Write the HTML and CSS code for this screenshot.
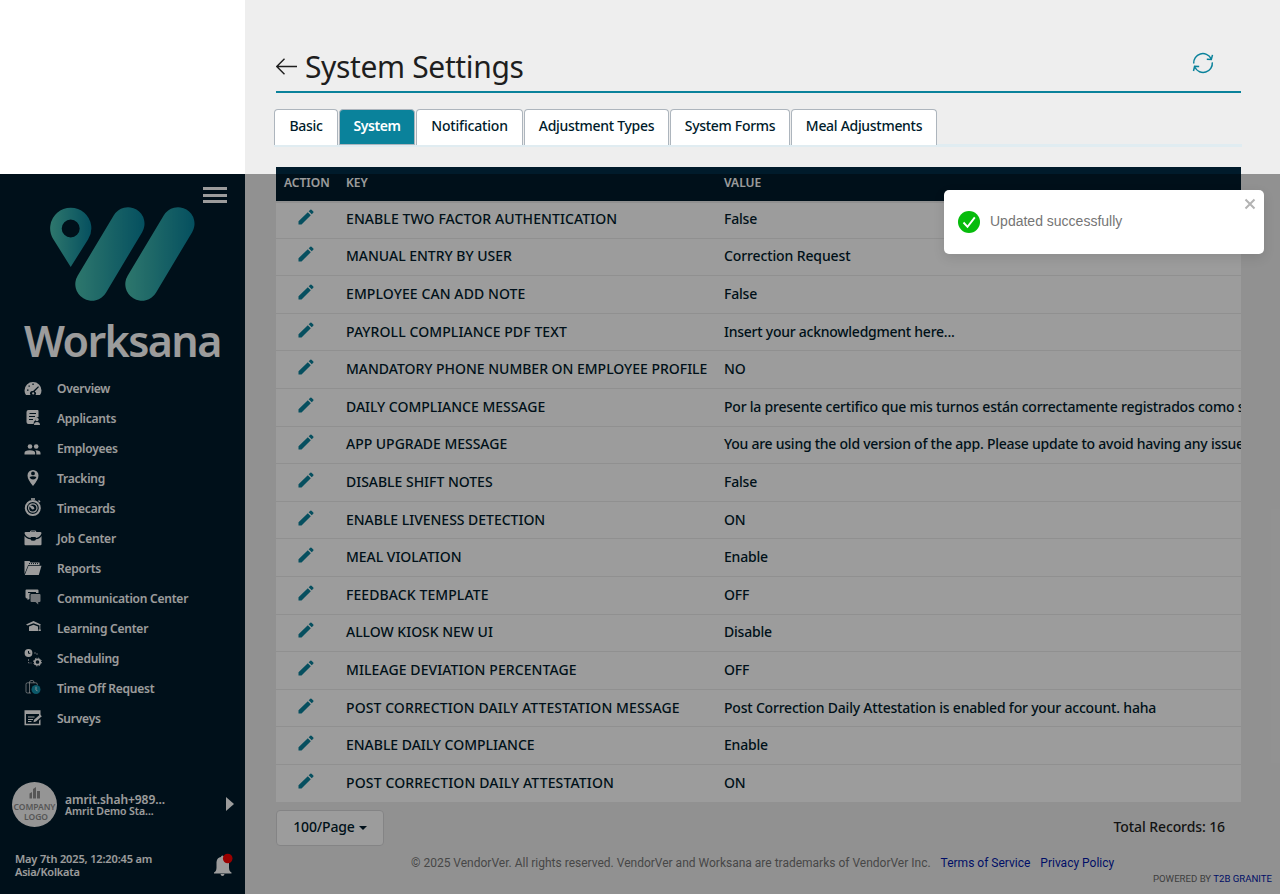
FILE: index.html
```
<!DOCTYPE html>
<html lang="en">
<head>
<meta charset="utf-8">
<title>System Settings</title>
<link rel="stylesheet" href="styles.css">
</head>
<body>
<svg class="defs" width="0" height="0">
  <symbol id="pencil" viewBox="0 0 16 16"><path d="M.5 15.500v-3.300L9.800 3.200l3 3-9.300 9.300zM10.700 2.300l1.600-1.600q.6-.5 1.200 0l1.800 1.800q.5.600 0 1.200l-1.600 1.600z"/></symbol>
</svg>
<div class="app">
  <aside class="sidebar">
    <div class="burger"><i></i><i></i><i></i></div>
    <svg class="mark" width="146" height="95" viewBox="0 0 146 95">
      <defs>
        <linearGradient id="g1" gradientUnits="userSpaceOnUse" x1="0" y1="0" x2="42" y2="0"><stop offset="0" stop-color="#4cc3b2"/><stop offset="1" stop-color="#08829c"/></linearGradient>
        <linearGradient id="g2" gradientUnits="userSpaceOnUse" x1="25" y1="0" x2="95" y2="0"><stop offset="0" stop-color="#4cc3b2"/><stop offset="1" stop-color="#08829c"/></linearGradient>
        <linearGradient id="g3" gradientUnits="userSpaceOnUse" x1="75" y1="0" x2="145" y2="0"><stop offset="0" stop-color="#4cc3b2"/><stop offset="1" stop-color="#08829c"/></linearGradient>
      </defs>
      <path fill="url(#g1)" fill-rule="evenodd" d="M20.700 60 3.500 32.500A20.600 20.600 0 1 1 38 32.500zM20.700 12.500a9 9 0 1 0 0 18 9 9 0 0 0 0-18z"/>
      <path stroke="url(#g2)" stroke-width="33" stroke-linecap="round" d="M78 16.700 41.800 77.200"/>
      <path stroke="url(#g3)" stroke-width="33" stroke-linecap="round" d="M128 16.700 91.800 77.200"/>
    </svg>
    <div class="brand">Worksana</div>
    <nav class="nav">
      <a><svg viewBox="0 0 18 18"><path fill-rule="evenodd" d="M2 16Q.5 14 .5 11.500a8.500 8.500 0 0 1 17 0q0 2.500-1.500 4.500h-4.500a2.500 2.500 0 0 0-.8-3.600l4.300-4.300-.9-.9-5 4.800a2.500 2.500 0 0 0-2.600 4zM3 10.500v1.300h1.500v-1.300zM4.500 6.500v1.300h1.300V6.500zM8.400 4.500v1.400h1.300V4.500z"/><circle cx="9.200" cy="14.400" r="1.100"/></svg>Overview</a>
      <a><svg viewBox="0 0 18 18"><path fill-rule="evenodd" d="M4.500 1h9q1 0 1 1v6q-3 .5-3 3-2 1.500-2 4h-5q-2 0-2-2V3q0-2 2-2zM5.500 4v1h6.500V4zM5 7v1h6V7zM5 10v1h4v-1z"/><circle cx="13" cy="10.500" r="1.700"/><path d="M10 16q0-3 3-3t3 3z"/></svg>Applicants</a>
      <a><svg viewBox="0 0 18 18"><circle cx="6" cy="7.500" r="2.300"/><circle cx="12.200" cy="7.500" r="2.300"/><path d="M.5 15.500V14q0-2.800 5.300-2.800t5.300 2.800v1.500zM12.300 15.500V14q0-1.600-1-2.800 5.200 0 5.200 2.800v1.500z"/></svg>Employees</a>
      <a><svg viewBox="0 0 18 18"><path fill-rule="evenodd" d="M9 17Q3.500 10.500 3.500 6.500a5.500 5.500 0 0 1 11 0Q14.500 10.500 9 17zM9 2.500a1.900 1.900 0 1 0 0 3.800 1.900 1.900 0 0 0 0-3.800zM5.500 8q1 2.600 3.500 2.600T12.500 8Q9 6.500 5.500 8z"/></svg>Tracking</a>
      <a><svg viewBox="0 0 18 18"><path d="M7-.8h4v1.600H7z"/><circle cx="8.800" cy="9" r="7" fill="none" stroke="currentColor" stroke-width="2"/><circle cx="8.800" cy="9" r="4.200" fill="none" stroke="currentColor" stroke-width="1.200"/><path d="M4 5.500 8.500 7q2.500 1.500 1.600 3.100-1.700 1.200-2.800-.6zM14 2l1-1 1.500 1.500-1 1z"/></svg>Timecards</a>
      <a><svg viewBox="0 0 18 18"><path fill-rule="evenodd" d="M6 3q0-1.500 1.200-1.500h4Q12.300 1.500 12.300 3h4q1.200 0 1.200 1.200Q16 8.500 12 9q0-1-1-1H7.500q-1 0-1 1Q2 8.500.5 4.200.5 3 1.700 3zm1.200 0h4v-.6h-4z"/><path d="M.5 7q2 3 6 3.200.3 1.500 2.700 1.500t2.800-1.500q4-.2 5.500-3.200v8.200q0 1-1 1h-15q-1 0-1-1z"/></svg>Job Center</a>
      <a><svg viewBox="0 0 18 18"><path d="M.5 15V2h5l1 1.500h9V6H4.200z"/><path d="M4.500 6.800h13L14.800 16H.8z"/><path d="M5 4.600h10" stroke="#001b2b" stroke-width="1" stroke-dasharray="1 1"/></svg>Reports</a>
      <a><svg viewBox="0 0 18 18"><path fill-rule="evenodd" d="M2.500.5h11q1 0 1 1V4H7Q5.500 4 5.500 5.500V10L3.500 11V9.500Q1.500 9.500 1.500 8V1.500q0-1 1-1zM4 3v1h8V3z"/><path opacity=".75" d="M7.500 5h8q1 0 1 1v6q0 1-1 1h-1.300v2.500L11.500 13h-4q-1 0-1-1V6q0-1 1-1z"/></svg>Communication Center</a>
      <a><svg viewBox="0 0 18 18"><path d="M9.500 2 2 5.500 3.500 6.500l6-2.200 6 2.200v4h-1V12h2.300v-1.500h-.5V6l.7-.5z"/><path d="m5 7.500 4.500-1.800L14 7.500V12H5z"/></svg>Learning Center</a>
      <a><svg viewBox="0 0 18 18"><circle cx="4.500" cy="4" r="3.900"/><path d="M4.500 2v2.300h1.800" stroke="#001b2b" fill="none"/><path d="M10 4h3v3M4.500 10v4h3" fill="none" stroke="currentColor" opacity=".6" stroke-dasharray="2 1"/><circle cx="13.500" cy="13" r="2.700" fill="none" stroke="currentColor" stroke-width="1.700"/><circle cx="13.500" cy="13" r="3.900" fill="none" stroke="currentColor" stroke-width="1" stroke-dasharray="1.500 1.560"/></svg>Scheduling</a>
      <a><svg viewBox="0 0 18 18"><g fill="none" stroke="currentColor" stroke-width=".8" opacity=".8"><path d="M7 14H3.500q-1.500 0-1.500-1.500V5.300q0-1.500 1.500-1.500h8.300q1.500 0 1.500 1.500v1M5.500 3.800V14M5.500 3.800q0-2.300 1.500-2.300h1.500q1.500 0 1.500 2.300"/></g><circle cx="12" cy="10.500" r="4.500" fill="#1292ad"/><path d="M12 7.700v3l1.500 1.500" stroke="#fff" fill="none" stroke-width=".9"/></svg>Time Off Request</a>
      <a><svg viewBox="0 0 18 18"><path fill-rule="evenodd" d="M.5 1.200h16v5l-1.500 1.500V5H2v9.800h13v-3l1.500-1.500v6H.5z"/><path d="M4 8h6.500M4 10.500h5M4 12.500h3.500" stroke="currentColor" stroke-width="1.200"/><path d="m9.500 13.200.5-2.500 6-5.200 1.800 1.800-5.800 5.300z"/></svg>Surveys</a>
    </nav>
    <div class="user">
      <div class="avatar">
        <svg width="12" height="12" viewBox="0 0 12 12"><path d="M.5 6.500 3 5v6.500H.5zM4 2l3-2v11.500H4zM8 4h3v7.500H8z" fill="#8d8d8d"/></svg>
        <span>COMPANY</span><span class="l2">LOGO</span>
      </div>
      <div class="who"><b>amrit.shah+989...</b><span>Amrit Demo Sta...</span></div>
      <i class="caret"></i>
    </div>
    <div class="clock">
      <div>May 7th 2025, 12:20:45 am<br><span class="tz">Asia/Kolkata</span></div>
      <svg width="20" height="24" viewBox="0 0 20 24"><path d="M1 19.500q2.500-1 2.500-5V9Q4 4.500 8 4q0-1.500 1.500-1.500T11 4q4.500.5 5 5v5.500q0 4 2.500 5v1H1zM7.500 21h4q-.3 2-2 2t-2-2z"/><circle cx="14.700" cy="5.500" r="4.800" fill="#fb0000"/></svg>
    </div>
  </aside>
  <main class="main">
    <header class="head">
      <svg class="back" width="22" height="18" viewBox="0 0 22 18"><path d="M21 9.500H1M8.500 1.800.8 9.500l7.700 7.700" fill="none" stroke="#1e1e1e" stroke-width="1.400"/></svg>
      <h1>System Settings</h1>
      <svg class="refresh" width="22" height="22" viewBox="0 0 22 22"><g fill="none" stroke="#0a829b" stroke-width="1.500"><path d="M1.700 11.500A9.200 9.200 0 0 1 19 6.500M20.300 10.300A9.200 9.200 0 0 1 3 15.500M14.800 7.300l4.500.1 1.200-4.500M7.200 14.400l-4.600-.2L1.500 19"/></g></svg>
    </header>
    <div class="tabs"><a class="w1">Basic</a><a class="w2 on">System</a><a class="w3">Notification</a><a class="w4">Adjustment Types</a><a class="w5">System Forms</a><a class="w6">Meal Adjustments</a></div>
    <div class="table">
      <div class="tr th"><span>ACTION</span><span>KEY</span><span>VALUE</span></div>
      <div class="tr"><svg><use href="#pencil"/></svg><span>ENABLE TWO FACTOR AUTHENTICATION</span><span class="v">False</span></div>
      <div class="tr"><svg><use href="#pencil"/></svg><span class="fit">MANUAL ENTRY BY USER</span><span class="v wide">Correction Request</span></div>
      <div class="tr"><svg><use href="#pencil"/></svg><span>EMPLOYEE CAN ADD NOTE</span><span class="v">False</span></div>
      <div class="tr"><svg><use href="#pencil"/></svg><span>PAYROLL COMPLIANCE PDF TEXT</span><span class="v tight">Insert your acknowledgment here...</span></div>
      <div class="tr"><svg><use href="#pencil"/></svg><span class="fit">MANDATORY PHONE NUMBER ON EMPLOYEE PROFILE</span><span class="v">NO</span></div>
      <div class="tr"><svg><use href="#pencil"/></svg><span class="fit">DAILY COMPLIANCE MESSAGE</span><span class="v long">Por la presente certifico que mis turnos están correctamente registrados como se</span></div>
      <div class="tr"><svg><use href="#pencil"/></svg><span class="fit">APP UPGRADE MESSAGE</span><span class="v tight">You are using the old version of the app. Please update to avoid having any issues</span></div>
      <div class="tr"><svg><use href="#pencil"/></svg><span class="fit">DISABLE SHIFT NOTES</span><span class="v">False</span></div>
      <div class="tr"><svg><use href="#pencil"/></svg><span class="fit">ENABLE LIVENESS DETECTION</span><span class="v">ON</span></div>
      <div class="tr"><svg><use href="#pencil"/></svg><span class="fit">MEAL VIOLATION</span><span class="v">Enable</span></div>
      <div class="tr"><svg><use href="#pencil"/></svg><span>FEEDBACK TEMPLATE</span><span class="v">OFF</span></div>
      <div class="tr"><svg><use href="#pencil"/></svg><span class="fit">ALLOW KIOSK NEW UI</span><span class="v">Disable</span></div>
      <div class="tr"><svg><use href="#pencil"/></svg><span>MILEAGE DEVIATION PERCENTAGE</span><span class="v">OFF</span></div>
      <div class="tr"><svg><use href="#pencil"/></svg><span>POST CORRECTION DAILY ATTESTATION MESSAGE</span><span class="v">Post Correction Daily Attestation is enabled for your account. haha</span></div>
      <div class="tr"><svg><use href="#pencil"/></svg><span class="fit">ENABLE DAILY COMPLIANCE</span><span class="v">Enable</span></div>
      <div class="tr"><svg><use href="#pencil"/></svg><span class="loose">POST CORRECTION DAILY ATTESTATION</span><span class="v">ON</span></div>
    </div>
    <div class="pager"><button>100/Page<i></i></button><span>Total Records: 16</span></div>
    <footer class="foot"><span>© 2025 VendorVer. All rights reserved. VendorVer and Worksana are trademarks of VendorVer Inc.</span><a>Terms of Service</a><a>Privacy Policy</a></footer>
    <div class="powered">POWERED BY <a>T2B GRANITE</a></div>
  </main>
</div>
<div class="overlay"></div>
<div class="toast">
  <svg width="22" height="22" viewBox="0 0 22 22"><circle cx="11" cy="11" r="11" fill="#07bc0c"/><path d="m5.500 11.500 4 4.300 7.300-9.500" fill="none" stroke="#fff" stroke-width="1.900"/></svg>
  <span>Updated successfully</span>
  <svg class="x" width="12" height="12" viewBox="0 0 12 12"><path d="m1.500 1.500 9 9m0-9-9 9" stroke="#b3b3b3" stroke-width="2"/></svg>
</div>
</body>
</html>
```
FILE: styles.css
```
* { box-sizing: border-box; }
body { margin: 0; width: 1280px; height: 894px; overflow: hidden; position: relative; background: #fff; color: #001b2b; font: 500 14px/20px "Noto Sans", sans-serif; }
.defs { display: block; }
.app { display: grid; grid-template-columns: 245px 1fr; height: 894px; }

.sidebar { margin-top: 174px; background: #001b2b; color: #fff; display: flex; flex-direction: column; }
.sidebar svg { fill: currentColor; }
.burger { align-self: flex-end; margin: 13px 18px 0 0; width: 24px; height: 16px; display: flex; flex-direction: column; justify-content: space-between; }
.burger i { height: 3px; background: #fff; }
.mark { margin: 4px 0 0 50px; flex: none; }
.sidebar .mark { fill: none; }
.brand { margin: 14px 0 0 24px; height: 50px; font-size: 43px; font-weight: 600; line-height: 50px; letter-spacing: -1.600px; white-space: nowrap; }
.nav { margin-top: 8px; display: flex; flex-direction: column; }
.nav a { height: 30px; padding-left: 24px; display: flex; align-items: center; font-size: 12px; font-weight: 600; letter-spacing: -.23px; }
.nav svg { width: 18px; height: 18px; margin: -2px 15px 0 0; overflow: visible; }
.user { margin-top: 48px; height: 45px; padding-left: 12px; display: flex; align-items: center; }
.avatar { width: 45px; height: 45px; border-radius: 50%; background: #f4f4f4; color: #8d8d8d; display: flex; flex-direction: column; align-items: center; padding-top: 5px; font-size: 8.500px; font-weight: 600; line-height: 10px; letter-spacing: -.05px; }
.avatar span { margin-top: 3px; }
.avatar .l2 { margin: 0 0 0 3px; }
.who { width: 160px; padding: 1px 0 0 8px; display: flex; flex-direction: column; font-size: 10.500px; line-height: 11px; font-weight: 600; letter-spacing: -.06px; }
.who b { font-size: 12px; line-height: 13px; font-weight: 600; }
.caret { margin: -2px 0 0 9px; border: solid transparent; border-width: 7px 0 7px 8px; border-left-color: #fff; }
.clock { margin-top: 25px; padding: 0 12px 0 15px; display: flex; justify-content: space-between; font-size: 11px; line-height: 13px; font-weight: 600; letter-spacing: -.15px; }
.clock svg { margin-top: 1px; }
.tz { letter-spacing: -.25px; }

.main { background: #eee; padding: 0 39px 0 31px; min-width: 0; }
.head { height: 93px; padding-top: 41px; border-bottom: 2px solid #0a829b; display: flex; align-items: center; }
h1 { margin: 1px 0 0 7px; flex: 1; font-size: 30px; line-height: 40px; font-weight: 400; letter-spacing: -.36px; color: #1e1e1e; }
.refresh { margin: -7px 27px 0 0; }
.tabs { margin: 16px -1px 0 -2px; height: 38px; display: flex; gap: 1px; border-bottom: 3px solid #e0ecf1; }
.tabs a { height: 36px; background: #fff; border: 1px solid #adb5bd; border-bottom: 0; border-radius: 4px 4px 0 0; text-align: center; line-height: 32px; letter-spacing: -.3px; white-space: nowrap; }
.tabs .on { background: #0a829b; border-bottom: 1px solid #adb5bd; color: #fff; font-weight: 600; letter-spacing: -.45px; }
.tabs .w3 { letter-spacing: -.18px; }
.w1 { width: 64px; } .w2 { width: 76px; } .w3 { width: 107px; } .w4 { width: 145px; } .w5 { width: 120px; } .w6 { width: 146px; }

.table { margin-top: 20px; width: 965px; background: #fff; }
.tr { height: 37.600px; display: grid; grid-template-columns: 62px 378px 1fr; align-items: center; border-bottom: 1px solid #ebebec; white-space: nowrap; letter-spacing: .09px; padding-bottom: 1px; }
.tr:last-child { height: 36.900px; border-bottom: 0; padding-bottom: 0; }
.tr span { padding-left: 8px; overflow: hidden; }
.tr svg { width: 16px; height: 16px; margin: -4px 0 0 22px; fill: #0a829b; }
.tr .fit { letter-spacing: -.02px; }
.tr .loose { letter-spacing: .14px; }
.tr .v { letter-spacing: -.2px; }
.tr .tight { letter-spacing: -.25px; }
.tr .long { letter-spacing: -.22px; }
.tr .wide { letter-spacing: -.12px; }
.th { height: 34.100px; background: #001b2b; color: #fff; font-size: 12px; font-weight: 600; border-bottom: 0; letter-spacing: 0; padding-bottom: 3px; }
.th + .tr { box-shadow: inset 0 2px #ececec; }

.pager { margin-top: 8px; height: 36px; padding-right: 16px; display: flex; justify-content: space-between; align-items: center; letter-spacing: -.15px; }
.pager span { margin-top: -2px; color: #1e1e1e; letter-spacing: -.1px; }
.pager button { width: 108px; height: 36px; border: 1px solid #d8d8da; border-radius: 4px; background: #fff; color: inherit; font: inherit; letter-spacing: inherit; display: flex; align-items: center; justify-content: center; padding: 0 0 2px; }
.pager i { margin: 3px 0 0 4px; border: solid transparent; border-width: 4px 4px 0; border-top-color: #001b2b; }
.foot { margin: 9px 0 0 135px; display: flex; gap: 10px; font: 400 12px/16px Roboto, sans-serif; color: #757575; white-space: nowrap; }
.foot a, .powered a { color: #0018a8; }
.powered { margin: 2px -31px 0 0; text-align: right; font: 400 9.600px/12px Roboto, sans-serif; color: #666; }

.overlay { position: absolute; left: 0; right: 0; top: 174px; bottom: 0; background: rgba(0, 0, 0, .39); }
.toast { position: absolute; left: 944px; top: 190px; width: 320px; height: 64px; padding-left: 14px; border-radius: 5px; background: #fff; box-shadow: 0 4px 12px rgba(0, 0, 0, .1); display: flex; align-items: center; color: #757575; font: 400 14px/20px "Liberation Sans", sans-serif; }
.toast span { margin: -2px 0 0 10px; }
.toast .x { margin: -36px 8px 0 auto; }
```
